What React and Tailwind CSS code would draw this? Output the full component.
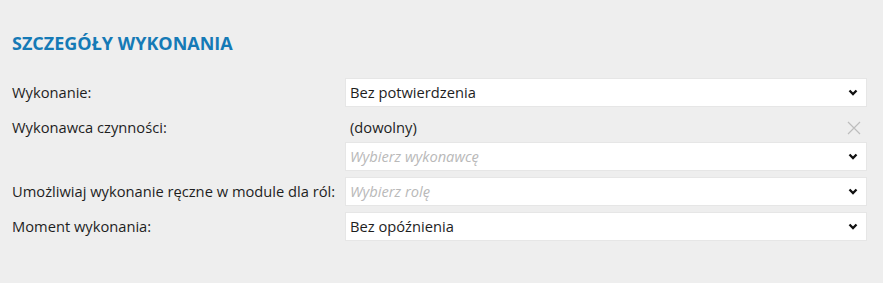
import React from "react";

const Chevron = () => (
  <svg width="10" height="7" viewBox="0 0 10 7" className="shrink-0">
    <polyline points="1.5,1.5 5,5 8.5,1.5" fill="none" stroke="#111" strokeWidth="2.3" />
  </svg>
);

const Select = ({ value, placeholder }) => (
  <div className="flex h-[29px] items-center justify-between border border-[#e6e6e6] bg-white pl-[4px] pr-[8px]">
    {value ? (
      <span className="text-[#1e1e1e]">{value}</span>
    ) : (
      <span className="italic text-[#b9b9b9]">{placeholder}</span>
    )}
    <Chevron />
  </div>
);

const Row = ({ label, children }) => (
  <div className="flex items-start">
    <div className="flex h-[29px] w-[333px] shrink-0 items-center whitespace-nowrap">{label}</div>
    <div className="flex-1">{children}</div>
  </div>
);

export default function App() {
  return (
    <div
      className="h-[283px] w-full bg-[#eeeeee] pl-[12px] pr-[16px] pt-[31px] text-[14.7px] text-[#1e1e1e]"
      style={{ fontFamily: '"Open Sans", "Noto Sans", sans-serif' }}
    >
      <h2 className="text-[18px] font-bold leading-[24px] text-[#157ab6]">SZCZEGÓŁY WYKONANIA</h2>

      <div className="mt-[23px] flex flex-col gap-[6px]">
        <Row label="Wykonanie:">
          <Select value="Bez potwierdzenia" />
        </Row>

        <Row label="Wykonawca czynności:">
          <div className="flex h-[29px] items-center justify-between pl-[5px] pr-[6px]">
            <span>(dowolny)</span>
            <svg width="14" height="14" viewBox="0 0 14 14">
              <path d="M1 1 L13 13 M13 1 L1 13" stroke="#bdbdbd" strokeWidth="1.2" fill="none" />
            </svg>
          </div>
          <Select placeholder="Wybierz wykonawcę" />
        </Row>

        <Row label="Umożliwiaj wykonanie ręczne w module dla ról:">
          <Select placeholder="Wybierz rolę" />
        </Row>

        <Row label="Moment wykonania:">
          <Select value="Bez opóźnienia" />
        </Row>
      </div>
    </div>
  );
}
